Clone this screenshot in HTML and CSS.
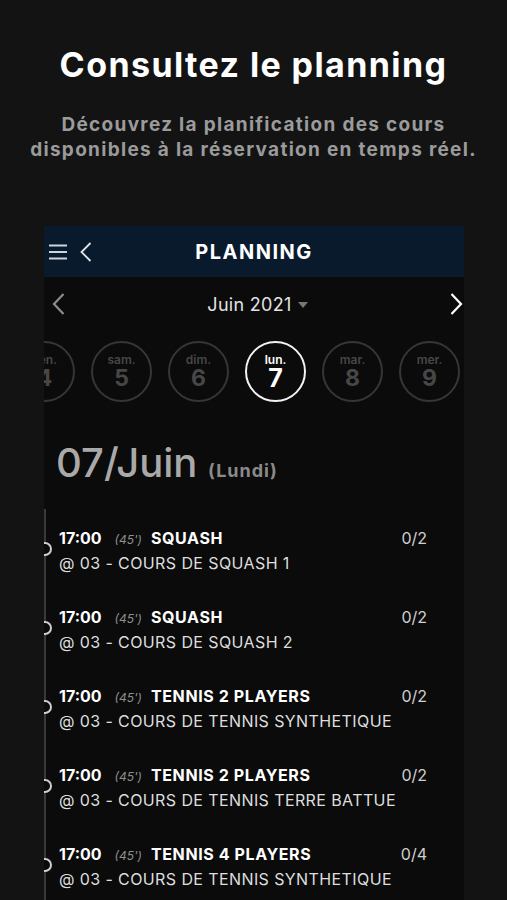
FILE: index.html
```html
<!DOCTYPE html>
<html lang="fr">
<head>
    <meta charset="UTF-8">
    <meta name="viewport" content="width=device-width, initial-scale=1.0">
    <title>Consultez le planning</title>
    <link rel="stylesheet" href="styles.css">
</head>
<body>
    <div class="intro">
        <h1>Consultez le planning</h1>
        <p>Découvrez la planification des cours<br>disponibles à la réservation en temps réel.</p>
    </div>

    <div class="phone">
        <div class="topbar">
            <div class="topbar-icons">
                <svg class="icon-menu" width="18" height="16" viewBox="0 0 18 16">
                    <path d="M0 1.5h18M0 8h18M0 14.5h18" stroke="#cdd4dd" stroke-width="2" fill="none"/>
                </svg>
                <svg class="icon-back" width="12" height="20" viewBox="0 0 12 20">
                    <path d="M10.5 1L1.5 10l9 9" stroke="#dfe4ea" stroke-width="1.8" fill="none"/>
                </svg>
            </div>
            <div class="topbar-title">PLANNING</div>
            <div></div>
        </div>

        <div class="month">
            <svg width="13" height="22" viewBox="0 0 13 22">
                <path d="M11.5 1L2 11l9.5 10" stroke="#8d8d8d" stroke-width="2.2" fill="none"/>
            </svg>
            <div class="month-label">Juin 2021 <span class="caret"></span></div>
            <svg width="13" height="22" viewBox="0 0 13 22">
                <path d="M1.5 1L11 11l-9.5 10" stroke="#ffffff" stroke-width="2.2" fill="none"/>
            </svg>
        </div>

        <div class="days">
            <div class="day"><span class="day-name">ven.</span><span class="day-num">4</span></div>
            <div class="day"><span class="day-name">sam.</span><span class="day-num">5</span></div>
            <div class="day"><span class="day-name">dim.</span><span class="day-num">6</span></div>
            <div class="day active"><span class="day-name">lun.</span><span class="day-num">7</span></div>
            <div class="day"><span class="day-name">mar.</span><span class="day-num">8</span></div>
            <div class="day"><span class="day-name">mer.</span><span class="day-num">9</span></div>
        </div>

        <h2 class="date">07/Juin <small>(Lundi)</small></h2>

        <div class="timeline">
            <div class="session">
                <div class="session-head">
                    <b>17:00</b><i>(45')</i><b>SQUASH</b><span class="count">0/2</span>
                </div>
                <div class="session-place">@ 03 - COURS DE SQUASH 1</div>
            </div>
            <div class="session">
                <div class="session-head">
                    <b>17:00</b><i>(45')</i><b>SQUASH</b><span class="count">0/2</span>
                </div>
                <div class="session-place">@ 03 - COURS DE SQUASH 2</div>
            </div>
            <div class="session">
                <div class="session-head">
                    <b>17:00</b><i>(45')</i><b>TENNIS 2 PLAYERS</b><span class="count">0/2</span>
                </div>
                <div class="session-place">@ 03 - COURS DE TENNIS SYNTHETIQUE</div>
            </div>
            <div class="session">
                <div class="session-head">
                    <b>17:00</b><i>(45')</i><b>TENNIS 2 PLAYERS</b><span class="count">0/2</span>
                </div>
                <div class="session-place">@ 03 - COURS DE TENNIS TERRE BATTUE</div>
            </div>
            <div class="session">
                <div class="session-head">
                    <b>17:00</b><i>(45')</i><b>TENNIS 4 PLAYERS</b><span class="count">0/4</span>
                </div>
                <div class="session-place">@ 03 - COURS DE TENNIS SYNTHETIQUE</div>
            </div>
        </div>
    </div>
</body>
</html>
```

FILE: styles.css
```css
html, body {
    height: 100%;
}
body {
    margin: 0;
    background-color: #131313;
    font-family: Inter, "Noto Sans", sans-serif;
    color: #fff;
    overflow: hidden;
}
.intro {
    text-align: center;
    padding-top: 45px;
}
.intro h1 {
    margin: 0;
    font-size: 34px;
    line-height: 40px;
    font-weight: 700;
    letter-spacing: 1.4px;
}
.intro p {
    margin: 27px 0 0;
    font-size: 19px;
    line-height: 25px;
    font-weight: 700;
    letter-spacing: 1.3px;
    color: #9b9b9b;
}
.phone {
    margin: 64px 0 0 44px;
    width: 420px;
    height: 700px;
    background-color: #0b0b0b;
    overflow: hidden;
}
.topbar {
    height: 51px;
    background-color: #0a1a2d;
    display: grid;
    grid-template-columns: 1fr auto 1fr;
    align-items: center;
}
.topbar-icons {
    display: flex;
    align-items: center;
    gap: 13px;
    padding-left: 5px;
}
.topbar-title {
    font-size: 20px;
    font-weight: 700;
    letter-spacing: 1.5px;
}
.month {
    height: 54px;
    display: flex;
    align-items: center;
    justify-content: space-between;
    padding: 0 1px 0 8px;
}
.month-label {
    font-size: 18px;
    color: #e2e2e2;
    letter-spacing: 0.3px;
    display: flex;
    align-items: center;
    gap: 6px;
}
.caret {
    width: 0;
    height: 0;
    border-left: 5px solid transparent;
    border-right: 5px solid transparent;
    border-top: 6px solid #777;
    margin-top: 2px;
}
.days {
    display: flex;
    gap: 16px;
    margin: 10px 0 0 -30px;
}
.day {
    flex: none;
    width: 57px;
    height: 57px;
    border: 2px solid #363636;
    border-radius: 50%;
    display: flex;
    flex-direction: column;
    align-items: center;
    justify-content: center;
    color: #474747;
}
.day-name {
    font-size: 12px;
    line-height: 13px;
    font-weight: 600;
}
.day-num {
    font-size: 23px;
    line-height: 25px;
    font-weight: 700;
}
.day.active {
    border-color: #f2f2f2;
    color: #fff;
}
.day.active .day-num {
    font-size: 25px;
}
.date {
    margin: 36px 0 0;
    padding-left: 12px;
    font-size: 40px;
    line-height: 50px;
    font-weight: 500;
    color: #a9a9a9;
}
.date small {
    font-size: 18px;
    font-weight: 700;
    letter-spacing: 1px;
    color: #8a8a8a;
}
.timeline {
    margin-top: 13px;
    border-left: 2px solid #3a3a3a;
}
.session {
    position: relative;
    padding: 17px 37px 12px 13px;
}
.session::before {
    content: "";
    position: absolute;
    left: -8px;
    top: 33px;
    width: 10px;
    height: 10px;
    border: 2px solid #cfcfcf;
    border-radius: 50%;
    background-color: #0b0b0b;
}
.session-head {
    display: flex;
    align-items: baseline;
    height: 25px;
    font-size: 16px;
    line-height: 25px;
}
.session-head b {
    font-weight: 700;
    letter-spacing: 0.6px;
}
.session-head b:first-child {
    letter-spacing: 0;
}
.session-head i {
    font-size: 12px;
    line-height: 16px;
    color: #8f8f8f;
    margin: 0 9px 0 13px;
}
.count {
    margin-left: auto;
    color: #cfcfcf;
}
.session-place {
    font-size: 16px;
    line-height: 25px;
    letter-spacing: 0.4px;
    color: #dedede;
}
```
